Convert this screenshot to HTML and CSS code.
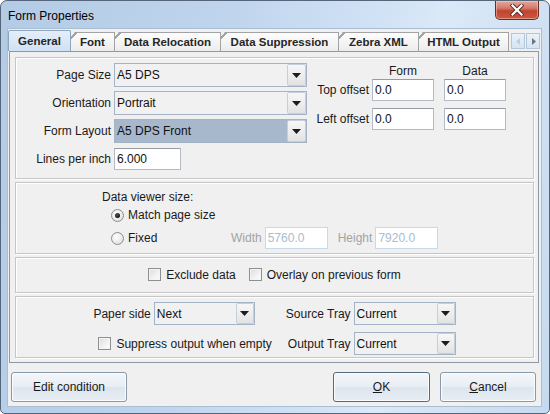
FILE: index.html
```html
<!DOCTYPE html>
<html>
<head>
<meta charset="utf-8">
<link rel="stylesheet" href="styles.css">
</head>
<body>
<div class="window">
  <div class="titlebar">
    <span class="title">Form Properties</span>
    <div class="close">
      <svg width="14" height="12" viewBox="0 0 14 12"><path d="M2.5 1.5 L11.5 10.5 M11.5 1.5 L2.5 10.5" stroke="#5a2a22" stroke-width="4" stroke-linecap="square"/><path d="M2.5 1.5 L11.5 10.5 M11.5 1.5 L2.5 10.5" stroke="#ffffff" stroke-width="2.2" stroke-linecap="square"/></svg>
    </div>
  </div>
  <div class="client">
    <div class="tabs">
      <div class="tab active w-general">General</div>
      <div class="tab w-font">Font</div>
      <div class="tab w-reloc">Data Relocation</div>
      <div class="tab w-supp">Data Suppression</div>
      <div class="tab w-zebra">Zebra XML</div>
      <div class="tab w-html">HTML Output</div>
      <div class="tab-scroll">
        <span class="sbtn"><svg width="5" height="7" viewBox="0 0 5 7"><path d="M4 0 L0 3.5 L4 7 Z" fill="#c4cdd6"/></svg></span>
        <span class="sbtn"><svg width="5" height="7" viewBox="0 0 5 7"><path d="M1 0 L5 3.5 L1 7 Z" fill="#6d747c"/></svg></span>
      </div>
    </div>
    <div class="panel">
      <div class="group g1">
        <div class="main-grid">
          <span class="lbl">Page Size</span>
          <div class="combo big"><span class="val">A5 DPS</span><span class="arrow"><svg width="9" height="5" viewBox="0 0 9 5"><path d="M0 0 H9 L4.5 5 Z" fill="#1c1c1c"/></svg></span></div>
          <span class="lbl">Orientation</span>
          <div class="combo big"><span class="val">Portrait</span><span class="arrow"><svg width="9" height="5" viewBox="0 0 9 5"><path d="M0 0 H9 L4.5 5 Z" fill="#1c1c1c"/></svg></span></div>
          <span class="lbl">Form Layout</span>
          <div class="combo big sel"><span class="val">A5 DPS Front</span><span class="arrow"><svg width="9" height="5" viewBox="0 0 9 5"><path d="M0 0 H9 L4.5 5 Z" fill="#1c1c1c"/></svg></span></div>
          <span class="lbl">Lines per inch</span>
          <div class="field lpi">6.000</div>
        </div>
        <div class="offsets">
          <div class="off-row head-row">
            <span class="off-lbl"></span>
            <span class="head">Form</span>
            <span class="head">Data</span>
          </div>
          <div class="off-row">
            <span class="off-lbl">Top offset</span>
            <div class="field off">0.0</div>
            <div class="field off">0.0</div>
          </div>
          <div class="off-row second">
            <span class="off-lbl">Left offset</span>
            <div class="field off">0.0</div>
            <div class="field off">0.0</div>
          </div>
        </div>
      </div>
      <div class="group g2">
        <div class="g2-title">Data viewer size:</div>
        <div class="radio-row r1"><span class="radio on"></span><span>Match page size</span></div>
        <div class="radio-row r2">
          <span class="fixed-opt"><span class="radio"></span><span>Fixed</span></span>
          <span class="dis-lbl">Width</span>
          <div class="field dis">5760.0</div>
          <span class="dis-lbl h-lbl">Height</span>
          <div class="field dis">7920.0</div>
        </div>
      </div>
      <div class="group g3">
        <span class="check-item"><span class="check"></span><span>Exclude data</span></span>
        <span class="check-item"><span class="check"></span><span>Overlay on previous form</span></span>
      </div>
      <div class="group g4">
        <div class="cell">
          <span class="lbl">Paper side</span>
          <div class="combo small"><span class="val">Next</span><span class="arrow"><svg width="9" height="5" viewBox="0 0 9 5"><path d="M0 0 H9 L4.5 5 Z" fill="#1c1c1c"/></svg></span></div>
        </div>
        <div class="cell right">
          <span class="lbl">Source Tray</span>
          <div class="combo tray"><span class="val">Current</span><span class="arrow"><svg width="9" height="5" viewBox="0 0 9 5"><path d="M0 0 H9 L4.5 5 Z" fill="#1c1c1c"/></svg></span></div>
        </div>
        <div class="cell suppress">
          <span class="check-item"><span class="check"></span><span>Suppress output when empty</span></span>
        </div>
        <div class="cell right">
          <span class="lbl">Output Tray</span>
          <div class="combo tray"><span class="val">Current</span><span class="arrow"><svg width="9" height="5" viewBox="0 0 9 5"><path d="M0 0 H9 L4.5 5 Z" fill="#1c1c1c"/></svg></span></div>
        </div>
      </div>
    </div>
    <div class="buttons">
      <div class="btn edit">Edit condition</div>
      <div class="btn ok default"><u>O</u>K</div>
      <div class="btn cancel"><u>C</u>ancel</div>
    </div>
  </div>
</div>
</body>
</html>
```

FILE: styles.css
```css
* { box-sizing: border-box; }

body {
  margin: 0;
  width: 550px;
  height: 414px;
  overflow: hidden;
  background: #ffffff;
  font-family: "Liberation Sans", Arial, sans-serif;
  font-size: 12px;
  color: #1a1a1a;
}

.window {
  width: 550px;
  height: 414px;
  border: 1px solid #55657a;
  border-radius: 7px 7px 5px 5px;
  background: linear-gradient(100deg, #b3cbe5 0%, #bed4ec 35%, #cfe1f5 60%, #dbe9f8 72%, #c6daef 100%);
  display: flex;
  flex-direction: column;
}

.titlebar {
  height: 27px;
  display: flex;
  align-items: flex-start;
  padding-left: 7px;
}

.title {
  margin-top: 8px;
  font-family: "Liberation Sans", Arial, sans-serif;
  font-size: 12px;
  color: #000;
}

.close {
  margin-left: auto;
  margin-right: 10px;
  width: 44px;
  height: 19px;
  border: 1px solid #6b2c22;
  border-top: none;
  border-radius: 0 0 5px 5px;
  background: linear-gradient(#e6a79b 0%, #d27a6a 40%, #c2432f 55%, #c95a40 100%);
  box-shadow: inset 0 0 0 1px rgba(255, 220, 210, 0.45);
  display: flex;
  align-items: center;
  justify-content: center;
}

.client {
  margin-left: 6px;
  width: 535px;
  height: 379px;
  background: #f0f0f0;
  border: 1px solid #a9bdd3;
  display: flex;
  flex-direction: column;
}

/* Tabs */
.tabs {
  height: 22px;
  display: flex;
  align-items: flex-end;
}

.tab {
  position: relative;
  height: 19px;
  margin-left: -1px;
  border: 1px solid #a3a3a3;
  border-bottom: none;
  background: linear-gradient(#fdfdfd, #ececec);
  font-size: 11.5px;
  font-weight: bold;
  color: #262626;
  display: flex;
  align-items: center;
  justify-content: center;
  clip-path: polygon(5px 0, 100% 0, 100% 100%, 0 100%, 0 5px);
}

.tab::before {
  content: "";
  position: absolute;
  left: -1px;
  top: -1px;
  width: 7px;
  height: 7px;
  background: linear-gradient(135deg, transparent 0, transparent 42%, #a3a3a3 42%, #a3a3a3 58%, transparent 58%);
}

.tab.active {
  height: 21px;
  margin-left: 0;
  z-index: 1;
  border-color: #8fa5bc;
  background: linear-gradient(#e4eefa, #cfe1f4);
  clip-path: none;
  border-radius: 2px 2px 0 0;
}

.tab.active::before { display: none; }

.w-general { width: 63px; }
.w-font { width: 45px; }
.w-reloc { width: 107px; }
.w-supp { width: 119px; }
.w-zebra { width: 81px; }
.w-html { width: 91px; }

.tab-scroll {
  display: flex;
  gap: 1px;
  margin-left: 2px;
  margin-bottom: 2px;
}

.sbtn {
  width: 14px;
  height: 16px;
  border: 1px solid #b4c6d9;
  background: linear-gradient(#eaf2fb, #d5e4f3);
  display: flex;
  align-items: center;
  justify-content: center;
}

/* Panel */
.panel {
  margin-left: 1px;
  width: 530px;
  height: 312px;
  border: 1px solid #8d99a7;
  background: #f0f0f0;
  padding: 5px 0 0 5px;
  display: flex;
  flex-direction: column;
  gap: 3px;
}

.group {
  width: 519px;
  border: 1px solid #c6c6c6;
  box-shadow: inset 1px 1px 0 #ffffff, 1px 1px 0 #ffffff;
}

.lbl {
  text-align: right;
  white-space: nowrap;
}

/* Group 1 */
.g1 {
  height: 122px;
  display: flex;
  align-items: flex-start;
}

.main-grid {
  display: grid;
  grid-template-columns: 95px 193px;
  grid-auto-rows: 24px;
  column-gap: 3px;
  row-gap: 4px;
  padding-top: 5px;
  align-items: center;
}

.combo {
  display: flex;
  height: 24px;
  border: 1px solid #a4b3c5;
  background: #f1f1f1;
}

.combo.small { width: 101px; height: 23px; }
.combo.tray { width: 102px; height: 23px; }
.combo.sel { background: #a7b8cc; }

.combo .val {
  flex: 1;
  padding-left: 2px;
  display: flex;
  align-items: center;
  color: #111;
}

.combo.sel .val { background: #a7b8cc; }

.combo .arrow {
  width: 19px;
  border: 1px solid #c3cfdc;
  border-radius: 2px;
  background: linear-gradient(#f7f7f7, #e3e3e3);
  display: flex;
  align-items: center;
  justify-content: center;
}

.combo.small .arrow, .combo.tray .arrow { width: 18px; }

.field {
  height: 22px;
  border: 1px solid #b4bbc4;
  border-top-color: #959ca6;
  background: #ffffff;
  padding-left: 2px;
  display: flex;
  align-items: center;
  color: #111;
}

.field.lpi { width: 67px; }
.field.off { width: 62px; }

.offsets {
  margin-left: 7px;
  padding-top: 7px;
  display: flex;
  flex-direction: column;
}

.off-row {
  display: flex;
  align-items: center;
  gap: 3px;
  height: 22px;
}

.off-row.head-row {
  height: 14px;
  align-items: flex-start;
}

.off-row.second { margin-top: 7px; }

.off-row > :nth-child(3) { margin-left: 7px; }

.off-lbl {
  width: 55px;
  text-align: right;
  white-space: nowrap;
}

.head {
  width: 62px;
  text-align: center;
  line-height: 13px;
}

/* Group 2 */
.g2 {
  height: 72px;
  padding: 7px 0 0 86px;
}

.g2-title {
  height: 14px;
  line-height: 14px;
}

.radio-row {
  display: flex;
  align-items: center;
  padding-left: 9px;
}

.radio-row.r1 {
  height: 16px;
  margin-top: 3px;
  gap: 4px;
}

.radio-row.r2 {
  height: 22px;
  margin-top: 4px;
}

.fixed-opt {
  width: 120px;
  display: flex;
  align-items: center;
  gap: 4px;
}

.radio {
  width: 13px;
  height: 13px;
  border-radius: 50%;
  border: 1px solid #8b8e92;
  background: radial-gradient(circle at 40% 35%, #ffffff 0, #f0f0f0 40%, #d4d7db 100%);
  display: inline-flex;
  align-items: center;
  justify-content: center;
}

.radio.on::after {
  content: "";
  width: 5px;
  height: 5px;
  border-radius: 50%;
  background: radial-gradient(circle at 40% 35%, #555 0, #111 70%);
}

.dis-lbl {
  color: #a3a3a3;
  margin-right: 3px;
}

.h-lbl { margin-left: 10px; }

.field.dis {
  width: 63px;
  border-color: #c8d9ea;
  color: #a9bcd1;
}

/* Group 3 */
.g3 {
  height: 36px;
  display: flex;
  align-items: center;
  justify-content: center;
  gap: 13px;
  padding-bottom: 1px;
}

.check-item {
  display: flex;
  align-items: center;
  gap: 5px;
  white-space: nowrap;
}

.check {
  width: 13px;
  height: 13px;
  border: 1px solid #8e8f8f;
  background: linear-gradient(135deg, #dcdcdc 0%, #f2f2f2 60%, #ffffff 100%);
  box-shadow: inset 0 0 0 1px #f4f4f4;
}

/* Group 4 */
.g4 {
  height: 62px;
  padding-top: 5px;
  display: grid;
  grid-template-columns: auto auto;
  grid-template-rows: 23px 23px;
  justify-content: center;
  column-gap: 14px;
  row-gap: 7px;
}

.cell {
  display: flex;
  align-items: center;
  gap: 3px;
}

.cell.right { justify-content: flex-end; }
.cell.suppress { padding-left: 5px; }

/* Buttons */
.buttons {
  margin-top: 9px;
  height: 30px;
  padding: 0 5px 0 3px;
  display: flex;
}

.btn {
  height: 30px;
  border: 1px solid #8a97a6;
  border-radius: 3px;
  background: linear-gradient(#f3f6fa 0%, #e9eef4 48%, #dde5ee 52%, #e6edf5 100%);
  box-shadow: inset 0 0 0 1px #fbfcfd;
  display: flex;
  align-items: center;
  justify-content: center;
  color: #1a1a1a;
}

.btn.edit { width: 116px; }
.btn.ok { width: 97px; margin-left: auto; }
.btn.cancel { width: 96px; margin-left: 10px; }
.btn.default { border-color: #55687e; }
.btn u { text-decoration: underline; }
```
